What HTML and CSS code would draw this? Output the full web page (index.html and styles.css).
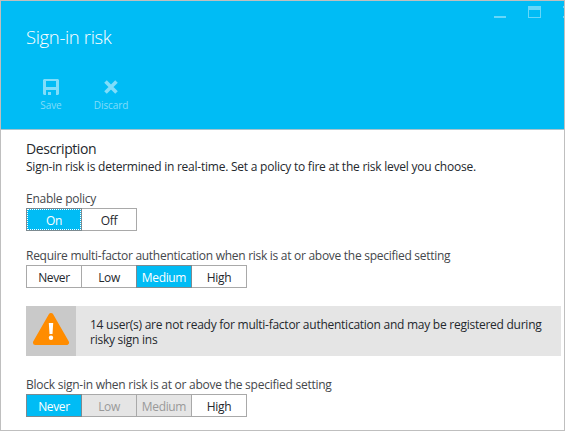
FILE: index.html
```html
<!DOCTYPE html>
<html lang="en">
<head>
<meta charset="utf-8">
<title>Sign-in risk</title>
<link rel="stylesheet" href="styles.css">
</head>
<body>
<div class="blade">
  <header class="header">
    <div class="window-controls">
      <svg width="65" height="22" viewBox="0 0 65 22" shape-rendering="crispEdges">
        <path d="M0 15h12v2H0z"/>
        <path fill-rule="evenodd" d="M34 5h13v12H34zM35 9v7h11V9z"/>
        <path d="M69 5h1v2h-1zM69 15h1v2h-1z"/>
      </svg>
    </div>
    <h1 class="title">Sign-in risk</h1>
    <div class="commands">
      <div class="command save">
        <svg width="16" height="16" viewBox="0 0 16 16"><path fill-rule="evenodd" d="M1 0h14l1 1v14l-1 1h-2v-5H3v5H1l-1-1V1zM3 2v6h10V2zM5 13h3v3H5z"/></svg>
        <span>Save</span>
      </div>
      <div class="command discard">
        <svg width="16" height="16" viewBox="0 0 16 16"><path d="M2.500 2.500l11 11M13.500 2.500l-11 11" stroke-width="3.600"/></svg>
        <span>Discard</span>
      </div>
    </div>
  </header>
  <main class="content">
    <h2 class="subtitle">Description</h2>
    <p class="description">Sign-in risk is determined in real-time. Set a policy to fire at the risk level you choose.</p>
    <section class="field">
      <div class="label">Enable policy</div>
      <div class="options">
        <div class="option selected focused">On</div>
        <div class="option">Off</div>
      </div>
    </section>
    <section class="field">
      <div class="label require">Require multi-factor authentication when risk is at or above the specified setting</div>
      <div class="options">
        <div class="option">Never</div>
        <div class="option">Low</div>
        <div class="option selected">Medium</div>
        <div class="option">High</div>
      </div>
    </section>
    <div class="alert">
      <div class="alert-icon">
        <svg width="38" height="34" viewBox="0 0 38 34">
          <path d="M19 3.500L34.500 30.500h-31z" fill="#ff8c00" stroke="#ff8c00" stroke-width="5" stroke-linejoin="round"/>
          <path d="M16.800 11h4.400l-.7 11h-3z" fill="#fff"/>
          <circle cx="19" cy="25.700" r="2.200" fill="#fff"/>
        </svg>
      </div>
      <div class="alert-text">
        <div>14 user(s) are not ready for multi-factor authentication and may be registered during</div>
        <div>risky sign ins</div>
      </div>
    </div>
    <section class="field last">
      <div class="label">Block sign-in when risk is at or above the specified setting</div>
      <div class="options">
        <div class="option selected">Never</div>
        <div class="option disabled">Low</div>
        <div class="option disabled">Medium</div>
        <div class="option">High</div>
      </div>
    </section>
  </main>
</div>
</body>
</html>
```
FILE: styles.css
```css
* { box-sizing: border-box; }
body {
  margin: 0;
  font-family: "Open Sans", "Noto Sans", sans-serif;
  font-size: 12px;
  color: #24282d;
}
h1, h2, p { margin: 0; font-weight: 400; }
svg { display: block; }
.blade {
  width: 565px;
  height: 431px;
  border: 1px solid #bfbfbf;
  background: #fff;
  overflow: hidden;
}
.header {
  height: 129px;
  background: #00bcf5;
  border-bottom: 1px solid #a6c3cd;
  color: #fff;
  position: relative;
}
.window-controls {
  position: absolute;
  top: 0;
  right: 5px;
}
.window-controls svg { fill: #66d7f9; overflow: visible; }
.title {
  padding: 22px 0 0 25px;
  font-size: 18.5px;
  line-height: 28px;
  font-weight: 300;
  letter-spacing: -0.35px;
  white-space: nowrap;
}
.commands { display: flex; padding: 28px 0 0 20px; color: #80ddfa; }
.command {
  width: 60px;
  display: flex;
  flex-direction: column;
  align-items: center;
  gap: 3px;
  font-size: 10px;
  letter-spacing: -0.1px;
  line-height: 14px;
}
.save svg { fill: #80ddfa; }
.discard svg { stroke: #80ddfa; }
.content { padding: 10px 3px 0 25px; white-space: nowrap; }
.subtitle { font-size: 14px; line-height: 18px; letter-spacing: -0.42px; }
.description { padding-top: 1px; line-height: 16px; letter-spacing: -0.235px; }
.label { line-height: 16px; color: #44474b; letter-spacing: -0.25px; margin-bottom: 1px; }
.require { letter-spacing: -0.28px; }
.field { margin-top: 17px; }
.description + .field { margin-top: 16px; }
.last { margin-top: 21px; }
.options { display: flex; }
.option {
  width: 56px;
  height: 23px;
  border: 1px solid #a9a9a9;
  text-align: center;
  line-height: 23px;
  letter-spacing: -0.35px;
}
.option + .option { margin-left: -1px; }
.selected { background: #00bcf5; border-color: #7c8a90; color: #fff; position: relative; }
.focused { outline: 1px dotted #fff; outline-offset: -2px; }
.disabled { background: #e5e5e5; color: #999; }
.alert { display: flex; height: 50px; margin-top: 18px; background: #e5e5e5; }
.alert-icon { width: 50px; background: #c9c9c9; padding: 6px; }
.alert-text { padding: 11px 0 0 14px; line-height: 15px; letter-spacing: -0.255px; }
```
